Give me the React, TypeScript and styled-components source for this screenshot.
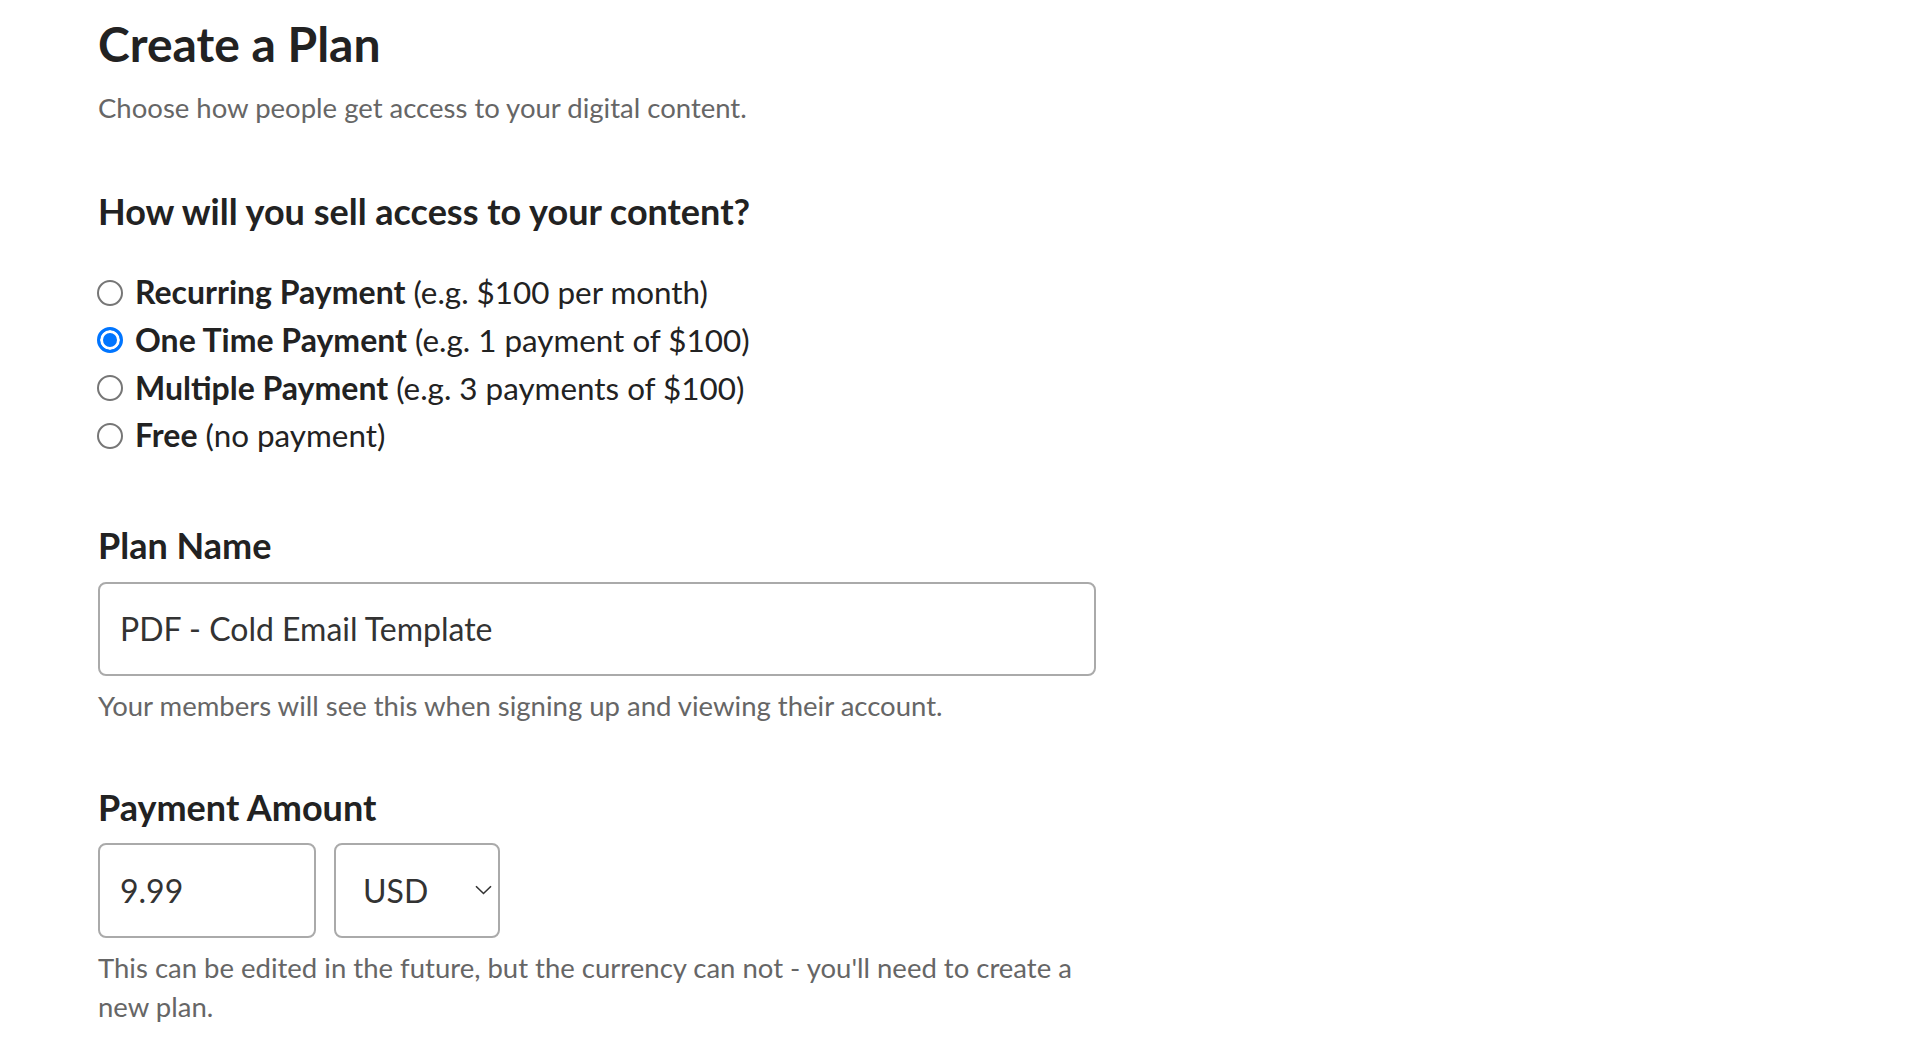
import React, { useState } from 'react';
import styled, { createGlobalStyle } from 'styled-components';

const GlobalStyle = createGlobalStyle`
  html, body {
    margin: 0;
    padding: 0;
    background: #ffffff;
  }

  body {
    font-family: Lato, "Open Sans", Arial, sans-serif;
    color: #222222;
  }

  * {
    box-sizing: border-box;
  }
`;

type PlanType = 'recurring' | 'one-time' | 'multiple' | 'free';

const OPTIONS: { value: PlanType; title: string; hint: string }[] = [
  { value: 'recurring', title: 'Recurring Payment', hint: '(e.g. $100 per month)' },
  { value: 'one-time', title: 'One Time Payment', hint: '(e.g. 1 payment of $100)' },
  { value: 'multiple', title: 'Multiple Payment', hint: '(e.g. 3 payments of $100)' },
  { value: 'free', title: 'Free', hint: '(no payment)' },
];

/**
 * App component
 * Form for creating a plan: access type, plan name and payment amount
 */
const App: React.FC = () => {
  const [planType, setPlanType] = useState<PlanType>('one-time');
  const [planName, setPlanName] = useState<string>('PDF - Cold Email Template');
  const [amount, setAmount] = useState<string>('9.99');
  const [currency, setCurrency] = useState<string>('USD');

  return (
    <>
      <GlobalStyle />
      <Page>
        <Title>Create a Plan</Title>
        <Subtitle>Choose how people get access to your digital content.</Subtitle>

        <SectionHeading>How will you sell access to your content?</SectionHeading>
        <OptionList>
          {OPTIONS.map((option) => (
            <OptionRow key={option.value}>
              <Radio
                type="radio"
                name="plan-type"
                value={option.value}
                checked={planType === option.value}
                onChange={() => setPlanType(option.value)}
              />
              <OptionText>
                <strong>{option.title}</strong> {option.hint}
              </OptionText>
            </OptionRow>
          ))}
        </OptionList>

        <FieldLabel htmlFor="plan-name" $gap={64}>Plan Name</FieldLabel>
        <TextInput
          id="plan-name"
          value={planName}
          onChange={(e) => setPlanName(e.target.value)}
        />
        <HelpText>Your members will see this when signing up and viewing their account.</HelpText>

        <FieldLabel htmlFor="amount" $gap={61}>Payment Amount</FieldLabel>
        <AmountRow>
          <AmountInput id="amount" value={amount} onChange={(e) => setAmount(e.target.value)} />
          <SelectWrap>
            <CurrencySelect value={currency} onChange={(e) => setCurrency(e.target.value)}>
              <option value="USD">USD</option>
              <option value="EUR">EUR</option>
              <option value="GBP">GBP</option>
            </CurrencySelect>
            <Chevron width="17" height="10" viewBox="0 0 17 10" aria-hidden="true">
              <path d="M1 1.2 L8.5 8.5 L16 1.2" fill="none" stroke="#333" strokeWidth="1.6" />
            </Chevron>
          </SelectWrap>
        </AmountRow>
        <HelpText>
          This can be edited in the future, but the currency can not - you'll need to create a new plan.
        </HelpText>
      </Page>
    </>
  );
};

const Page = styled.main`
  display: flex;
  flex-direction: column;
  align-items: flex-start;
  max-width: 1096px;
  padding: 15px 0 40px 98px;
`;

const Title = styled.h1`
  margin: 0;
  font-size: 48px;
  line-height: 1.2;
  font-weight: 700;
  color: #222222;
`;

const Subtitle = styled.p`
  margin: 14px 0 0;
  font-size: 27.5px;
  line-height: 42px;
  color: #666666;
`;

const SectionHeading = styled.h2`
  margin: 61px 0 0;
  font-size: 36px;
  line-height: 1.2;
  font-weight: 700;
  color: #222222;
`;

const OptionList = styled.div`
  display: flex;
  flex-direction: column;
  margin-top: 36px;
`;

const OptionRow = styled.label`
  display: flex;
  align-items: center;
  gap: 12px;
  height: 47.7px;
  cursor: pointer;
`;

const Radio = styled.input`
  appearance: none;
  -webkit-appearance: none;
  flex-shrink: 0;
  width: 26px;
  height: 26px;
  margin: 0 0 0 -1px;
  border-radius: 50%;
  border: 2px solid #767676;
  background: #ffffff;
  cursor: pointer;

  &:checked {
    border: 3px solid #0075ff;
    background: #0075ff;
    box-shadow: inset 0 0 0 3px #ffffff;
  }
`;

const OptionText = styled.span`
  font-size: 31.4px;
  line-height: 47.7px;
  color: #222222;

  strong {
    font-size: 32px;
    font-weight: 700;
  }
`;

const FieldLabel = styled.label<{ $gap: number }>`
  display: block;
  margin-top: ${(p) => p.$gap}px;
  font-size: 36px;
  line-height: 1.2;
  font-weight: 700;
  color: #222222;
`;

const fieldBase = `
  height: 94px;
  border: 2px solid #aaaaaa;
  border-radius: 8px;
  background: #ffffff;
  font-family: Lato, "Open Sans", Arial, sans-serif;
  font-size: 32px;
  color: #333333;
  outline: none;
`;

const TextInput = styled.input`
  ${fieldBase}
  width: 998px;
  margin-top: 15px;
  padding: 0 20px;
`;

const HelpText = styled.p`
  max-width: 998px;
  margin: 10px 0 0;
  font-size: 27.5px;
  line-height: 39px;
  color: #666666;
`;

const AmountRow = styled.div`
  display: flex;
  gap: 18px;
  margin-top: 14px;
`;

const AmountInput = styled.input`
  ${fieldBase}
  width: 218px;
  height: 95px;
  padding: 0 20px;
`;

const SelectWrap = styled.div`
  position: relative;
  display: flex;
`;

const CurrencySelect = styled.select`
  ${fieldBase}
  appearance: none;
  -webkit-appearance: none;
  width: 166px;
  height: 95px;
  padding: 0 40px 0 27px;
  cursor: pointer;
`;

const Chevron = styled.svg`
  position: absolute;
  right: 8px;
  top: 50%;
  transform: translateY(-50%);
  pointer-events: none;
`;

export default App;
